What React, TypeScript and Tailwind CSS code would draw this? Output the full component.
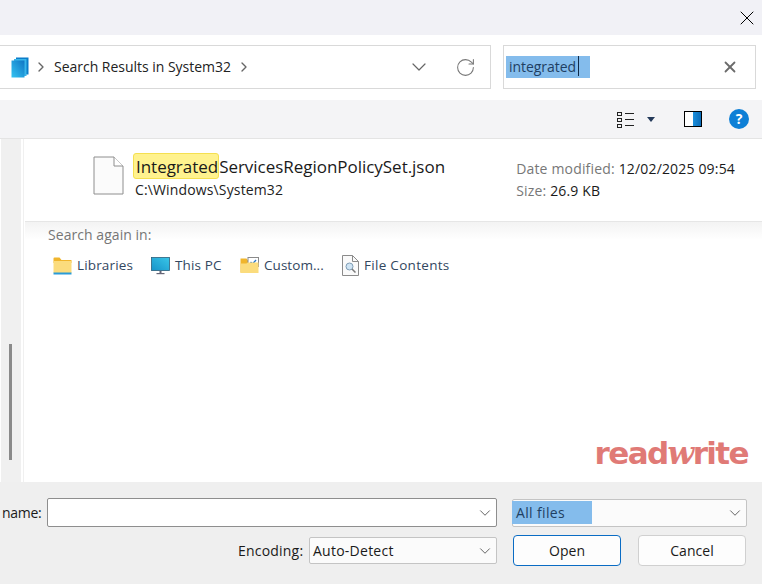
import { ChevronDown, ChevronRight, RotateCw, X } from "lucide-react";

const font = { fontFamily: '"Open Sans", "Noto Sans", sans-serif' };

function StackIcon() {
  return (
    <svg width="18" height="21" viewBox="0 0 18 21">
      <defs>
        <linearGradient id="stack" x1="0" y1="1" x2="1" y2="0">
          <stop offset="0" stopColor="#35c4f2" />
          <stop offset="1" stopColor="#0f75c4" />
        </linearGradient>
      </defs>
      <path d="M5 0.5h12.5v17H15V3H5z" fill="#0b7dc9" />
      <path d="M3 2h12.5v17H13V4.500H3z" fill="#38b6ea" />
      <rect x="0.5" y="3.500" width="13" height="17" fill="url(#stack)" />
    </svg>
  );
}

function FileIcon() {
  return (
    <svg width="31" height="39" viewBox="0 0 31 39" fill="none">
      <path d="M1 1h20l9 9v28H1z" fill="#fbfbfb" stroke="#8e8e8e" />
      <path d="M21 1v9h9" stroke="#8e8e8e" fill="#fff" />
    </svg>
  );
}

function FolderIcon() {
  return (
    <svg width="19" height="18" viewBox="0 0 19 18">
      <path d="M0.500 1.500a1 1 0 0 1 1-1h5l2 2.500h10v3H0.500z" fill="#f0b52c" />
      <path d="M0.500 4h18v12h-18z" fill="#fbdc7d" />
      <rect x="0.500" y="15.500" width="18" height="2" fill="#2a9bd8" />
    </svg>
  );
}

function MonitorIcon() {
  return (
    <svg width="19" height="18" viewBox="0 0 19 18">
      <defs>
        <linearGradient id="screen" x1="0" y1="1" x2="1" y2="0">
          <stop offset="0" stopColor="#1793c9" />
          <stop offset="1" stopColor="#39c6e8" />
        </linearGradient>
      </defs>
      <rect x="0.500" y="0.500" width="18" height="13" fill="url(#screen)" stroke="#2b5f7c" strokeWidth="0.8" />
      <rect x="8.500" y="14" width="2" height="2" fill="#667" />
      <rect x="5.500" y="16" width="8" height="1.200" fill="#667" />
    </svg>
  );
}

function CustomIcon() {
  return (
    <svg width="19" height="18" viewBox="0 0 19 18">
      <path d="M0.500 1.500h6l1.500 2h4v12h-11.500z" fill="#f0b52c" />
      <rect x="8" y="0.500" width="10.500" height="9" fill="#fff" stroke="#8a8a8a" />
      <path d="M10.500 5l2 2 3.500-4" stroke="#2a78c8" strokeWidth="1.400" fill="none" />
      <path d="M0.500 6.500h6l1-1h11v10.500h-18z" fill="#fbdc7d" />
    </svg>
  );
}

function SearchFileIcon() {
  return (
    <svg width="17" height="21" viewBox="0 0 17 21" fill="none">
      <path d="M0.500 0.500h10l6 6v14h-16z" fill="#fafafa" stroke="#8b8b8b" />
      <path d="M10.500 0.500v6h6" stroke="#8b8b8b" />
      <circle cx="7.500" cy="11.500" r="3.500" fill="#cfe4f4" stroke="#7f9db5" />
      <path d="M10 14l3.500 3.500" stroke="#7a7a7a" strokeWidth="1.500" />
    </svg>
  );
}

function ViewIcon() {
  return (
    <svg width="18" height="17" viewBox="0 0 18 17" fill="none" stroke="#222">
      <rect x="0.500" y="1.500" width="4" height="3" />
      <rect x="0.500" y="7.500" width="4" height="3" />
      <rect x="0.500" y="13.500" width="4" height="3" />
      <path d="M8 2.500h9M8 8.500h9M8 14.500h9" />
    </svg>
  );
}

function SearchAgain({ icon, label, width, tracking }: { icon: React.ReactNode; label: string; width: string; tracking: string }) {
  return (
    <div className={`flex items-center gap-[5px] ${width}`}>
      {icon}
      <span className={`text-[13.5px] text-[#33475f] ${tracking}`}>{label}</span>
    </div>
  );
}

export default function App() {
  return (
    <div style={font} className="w-[762px] h-[584px] overflow-hidden flex flex-col bg-white text-[#1a1a1a]">
      <div className="h-[35px] bg-[#f1f1f6] flex items-center justify-end pr-[3px]">
        <X size={24} strokeWidth={1} className="text-black" />
      </div>

      <div className="h-[65px] pt-[10px] flex items-start">
        <div className="w-[491px] h-[44px] border-y border-r border-[#d9d9d9] flex items-center pl-[11px]">
          <StackIcon />
          <ChevronRight size={16} strokeWidth={2} className="ml-[4px] text-[#666]" />
          <span className="ml-[5px] mb-[2px] text-[14px] tracking-[-0.02px] text-[#222]">Search Results in System32</span>
          <ChevronRight size={16} strokeWidth={2} className="ml-[5px] text-[#666]" />
          <ChevronDown size={24} strokeWidth={1.2} className="ml-auto text-[#666]" />
          <RotateCw size={21} strokeWidth={1.2} className="ml-[24px] mr-[14px] text-[#777]" />
        </div>
        <div className="ml-[12px] w-[253px] h-[44px] border border-[#d9d9d9] flex items-center pl-[2px] pr-[16px]">
          <span className="relative w-[84px] h-[22px] bg-[#84bcec] pl-[3px] text-[14px] leading-[22px] tracking-[-0.05px] text-[#1f3f63]">
            integrated
            <span className="absolute left-[72px] top-0 w-px h-[20px] bg-[#102a48]" />
          </span>
          <X size={18} strokeWidth={2.4} className="ml-auto text-[#6b6b6b]" />
        </div>
      </div>

      <div className="h-[39px] bg-[#f4f4f6] border-b border-[#e4e4e4] flex items-center pl-[617px]">
        <ViewIcon />
        <span className="ml-[12px] w-0 h-0 border-x-[4px] border-x-transparent border-t-[5px] border-t-[#243a5a]" />
        <span className="ml-[29px] w-[18px] h-[16px] border border-black bg-[linear-gradient(90deg,#fff_50%,#1c8fdc_50%,#0c6cb8)]" />
        <span className="ml-[27px] w-[20px] h-[20px] rounded-full bg-[#0d7fd6] text-white text-[14px] font-bold leading-[20px] text-center">?</span>
      </div>

      <div className="flex-1 flex min-h-0">
        <div className="ml-px w-[20px] bg-[#f0f0f0] flex flex-col justify-end pb-[22px] pl-[8px]">
          <div className="w-[3px] h-[116px] bg-[#8a8a8a]" />
        </div>
        <div className="ml-[2px] w-px bg-[#f0f0f0]" />
        <div className="flex-1 flex flex-col min-w-0 pl-px">
          <div className="h-[83px] shrink-0 border-b border-[#e6e6e6] flex items-start pt-[14px]">
            <div className="ml-[68px] mt-[3px]">
              <FileIcon />
            </div>
            <div className="ml-[9px] flex flex-col">
              <div className="text-[17px] leading-[26px] tracking-[-0.03px] text-[#1a1a1a]">
                <span className="inline-block h-[26px] pl-[2px] bg-[#fff28e] border border-[#f5e050] rounded-[3px] leading-[26px]">Integrated</span>
                ServicesRegionPolicySet.json
              </div>
              <div className="ml-[2px] text-[14px] leading-[20px] tracking-[0.14px] text-[#222]">C:\Windows\System32</div>
            </div>
            <div className="ml-auto mr-[27px] pt-[5px] text-[14px] leading-[22px] tracking-[0.17px] text-[#777]">
              <div>Date modified: <span className="text-[#1a1a1a]">12/02/2025 09:54</span></div>
              <div>Size: <span className="text-[#1a1a1a]">26.9 KB</span></div>
            </div>
          </div>
          <div className="flex-1 relative bg-[linear-gradient(#f3f3f3,#ffffff_18px)] pl-[23px] pt-[3px]">
            <div className="text-[14px] leading-[20px] tracking-[0.05px] text-[#767676]">Search again in:</div>
            <div className="mt-[10px] ml-[5px] flex items-center">
              <SearchAgain icon={<FolderIcon />} label="Libraries" width="w-[98px]" tracking="tracking-[0.15px]" />
              <SearchAgain icon={<MonitorIcon />} label="This PC" width="w-[89px]" tracking="tracking-[0.15px]" />
              <SearchAgain icon={<CustomIcon />} label="Custom..." width="w-[102px]" tracking="tracking-[0.05px]" />
              <SearchAgain icon={<SearchFileIcon />} label="File Contents" width="" tracking="tracking-[0.3px]" />
            </div>
            <div
              style={{ fontFamily: '"DejaVu Sans", sans-serif' }}
              className="absolute right-[14px] bottom-[13px] text-[31px] leading-[32px] font-bold tracking-[-1.6px] text-[#e07a76]"
            >
              read<span style={{ fontFamily: '"DejaVu Serif", serif' }} className="italic">w</span>rite
            </div>
          </div>
        </div>
      </div>

      <div className="h-[102px] shrink-0 bg-[#efefef] pt-[16px] text-[14px] tracking-[0.05px] text-[#1a1a1a]">
        <div className="flex items-center h-[29px]">
          <span className="ml-[2px] w-[39px] tracking-[-0.3px]">name:</span>
          <div className="ml-[6px] w-[450px] h-[29px] bg-white border border-[#8e8e8e] rounded-[2px] flex items-center justify-end pr-[2px]">
            <ChevronDown size={18} strokeWidth={1.2} className="text-[#555]" />
          </div>
          <div className="ml-[15px] w-[235px] h-[28px] bg-[#fbfbfb] border border-[#c4c4c4] rounded-[2px] flex items-center pr-[2px]">
            <span className="w-[80px] h-[23px] -ml-px bg-[#84bcec] pl-[4px] leading-[23px] tracking-[0.35px] text-[#1f3f63]">All files</span>
            <ChevronDown size={18} strokeWidth={1.2} className="ml-auto text-[#555]" />
          </div>
        </div>
        <div className="flex items-center mt-[8px] h-[31px]">
          <span className="ml-[238px] w-[71px] tracking-[0.2px]">Encoding:</span>
          <div className="w-[188px] h-[27px] bg-[#fbfbfb] border border-[#c4c4c4] rounded-[2px] flex items-center pl-[3px] pr-[2px] tracking-[0.25px]">
            Auto-Detect
            <ChevronDown size={18} strokeWidth={1.2} className="ml-auto text-[#555]" />
          </div>
          <div className="ml-[16px] w-[108px] h-[31px] bg-[#fdfdfd] border border-[#0a6cc4] rounded-[4px] flex items-center justify-center">Open</div>
          <div className="ml-[17px] w-[108px] h-[31px] bg-[#fdfdfd] border border-[#d0d0d0] rounded-[4px] flex items-center justify-center">Cancel</div>
        </div>
      </div>
    </div>
  );
}
